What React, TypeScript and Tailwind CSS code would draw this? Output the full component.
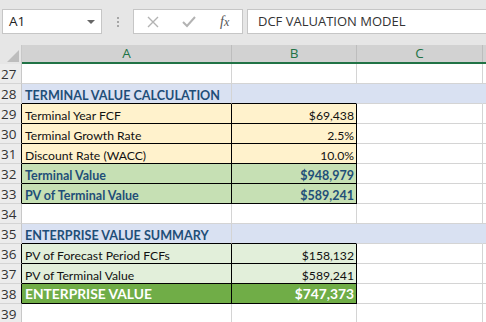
import React from "react";

type Row = {
  n: number;
  a?: string;
  b?: string;
  kind: "blank" | "section" | "input" | "result" | "summary" | "total";
};

const rows: Row[] = [
  { n: 27, kind: "blank" },
  { n: 28, a: "TERMINAL VALUE CALCULATION", kind: "section" },
  { n: 29, a: "Terminal Year FCF", b: "$69,438", kind: "input" },
  { n: 30, a: "Terminal Growth Rate", b: "2.5%", kind: "input" },
  { n: 31, a: "Discount Rate (WACC)", b: "10.0%", kind: "input" },
  { n: 32, a: "Terminal Value", b: "$948,979", kind: "result" },
  { n: 33, a: "PV of Terminal Value", b: "$589,241", kind: "result" },
  { n: 34, kind: "blank" },
  { n: 35, a: "ENTERPRISE VALUE SUMMARY", kind: "section" },
  { n: 36, a: "PV of Forecast Period FCFs", b: "$158,132", kind: "summary" },
  { n: 37, a: "PV of Terminal Value", b: "$589,241", kind: "summary" },
  { n: 38, a: "ENTERPRISE VALUE", b: "$747,373", kind: "total" },
  { n: 39, kind: "blank" },
];

const boxed = ["input", "result", "summary", "total"];

function cellStyle(kind: Row["kind"]) {
  switch (kind) {
    case "section":
      return "bg-[#d9e1f2] text-[#1f4e78] font-bold text-[12.6px] pt-[2px] leading-[19px]";
    case "input":
      return "bg-[#fff2cc] text-[#111] text-[12.2px] pt-[2px] leading-[19px]";
    case "result":
      return "bg-[#c6e0b4] text-[#1f4e78] font-bold text-[12.5px] pt-[2px] leading-[19px]";
    case "summary":
      return "bg-[#e2efda] text-[#111] text-[12.2px] pt-[2px] leading-[19px]";
    case "total":
      return "bg-[#70ad47] text-white font-bold text-[13.8px] leading-[20px]";
    default:
      return "bg-white";
  }
}

function SheetRow({ row, next }: { row: Row; next?: Row }) {
  const box = boxed.includes(row.kind);
  const nextBox = next ? boxed.includes(next.kind) : false;
  const bottom = box || nextBox ? "border-b-black" : "border-b-[#d4d4d4]";
  const style = cellStyle(row.kind);
  const fill = row.kind === "section" ? "bg-[#d9e1f2]" : "bg-white";
  return (
    <div className="flex h-5">
      <div
        className={`w-[22px] shrink-0 border-b border-r border-b-[#d4d4d4] bg-[#ececec] pt-[1px] pl-[1px] font-['Open_Sans',sans-serif] text-[13.5px] leading-[19px] text-[#333] ${
          box ? "border-r-black" : "border-r-[#c8c8c8]"
        }`}
      >
        {row.n}
      </div>
      <div
        className={`relative z-10 w-[210px] shrink-0 overflow-visible border-b border-r pl-[3px] whitespace-nowrap ${style} ${bottom} ${
          box ? "border-r-black" : "border-r-[#d4d4d4]"
        }`}
      >
        {row.a}
      </div>
      <div
        className={`w-[125px] shrink-0 border-b border-r pr-[2px] text-right ${style} ${bottom} ${
          box ? "border-r-black" : row.kind === "section" ? "border-r-[#d9e1f2]" : "border-r-[#d4d4d4]"
        }`}
      >
        {row.b}
      </div>
      <div
        className={`w-[126px] shrink-0 border-b border-r border-b-[#d4d4d4] ${fill} ${
          row.kind === "section" ? "border-r-[#d9e1f2]" : "border-r-[#d4d4d4]"
        }`}
      />
      <div className={`flex-1 border-b border-b-[#d4d4d4] ${fill}`} />
    </div>
  );
}

export default function App() {
  return (
    <div className="h-[322px] w-[486px] overflow-hidden bg-white font-['Lato','Liberation_Sans',sans-serif] text-[12.2px]">
      {/* formula bar */}
      <div className="flex h-[45px] items-start bg-[#e6e6e6] pt-[9px] pl-[2px]">
        <div className="flex h-[25px] w-[100px] items-center justify-between border border-[#c6c6c6] bg-white px-[6px] font-['Open_Sans',sans-serif] text-[13.5px] text-[#222]">
          <span>A1</span>
          <svg width="8" height="4" viewBox="0 0 8 4">
            <path d="M0 0h8L4 4z" fill="#666" />
          </svg>
        </div>
        <div className="flex h-[25px] w-[31px] flex-col items-center justify-center gap-[2px]">
          <span className="h-[2px] w-[2px] bg-[#a6a6a6]" />
          <span className="h-[2px] w-[2px] bg-[#a6a6a6]" />
          <span className="h-[2px] w-[2px] bg-[#a6a6a6]" />
        </div>
        <div className="flex h-[25px] w-[110px] items-center border border-[#c6c6c6] bg-white">
          <svg className="ml-[13px]" width="12" height="12" viewBox="0 0 12 12">
            <path d="M1 1l10 10M11 1L1 11" stroke="#b3b3b3" strokeWidth="1.4" />
          </svg>
          <svg className="ml-[23px]" width="14" height="12" viewBox="0 0 14 12">
            <path d="M1 6l4 4 8-9" stroke="#b3b3b3" strokeWidth="2" fill="none" />
          </svg>
          <span className="ml-[24px] font-['Liberation_Serif',serif] text-[14px] text-[#555] italic">
            f<span className="text-[12px]">x</span>
          </span>
        </div>
        <div className="ml-[4px] flex h-[25px] flex-1 items-center border border-r-0 border-[#c6c6c6] bg-white pl-[10px] font-['Open_Sans',sans-serif] text-[13px] text-[#333]">
          DCF VALUATION MODEL
        </div>
      </div>

      {/* column headers */}
      <div className="flex h-[19px]">
        <div className="relative w-[22px] shrink-0 border-r border-[#c8c8c8] bg-[#e6e6e6]">
          <svg className="absolute right-[2px] bottom-[2px]" width="12" height="12" viewBox="0 0 12 12">
            <path d="M12 0v12H0z" fill="#bdbdbd" />
          </svg>
        </div>
        <div className="flex flex-1 border-b-2 border-[#217346] bg-[#d2d2d2] font-['Open_Sans',sans-serif] text-[13.5px] leading-[17px] text-[#217346]">
          <div className="w-[210px] shrink-0 border-r border-[#bdbdbd] text-center">A</div>
          <div className="w-[125px] shrink-0 border-r border-[#bdbdbd] text-center">B</div>
          <div className="w-[126px] shrink-0 border-r border-[#bdbdbd] text-center">C</div>
          <div className="flex-1" />
        </div>
      </div>

      {rows.map((r, i) => (
        <SheetRow key={r.n} row={r} next={rows[i + 1]} />
      ))}
    </div>
  );
}
